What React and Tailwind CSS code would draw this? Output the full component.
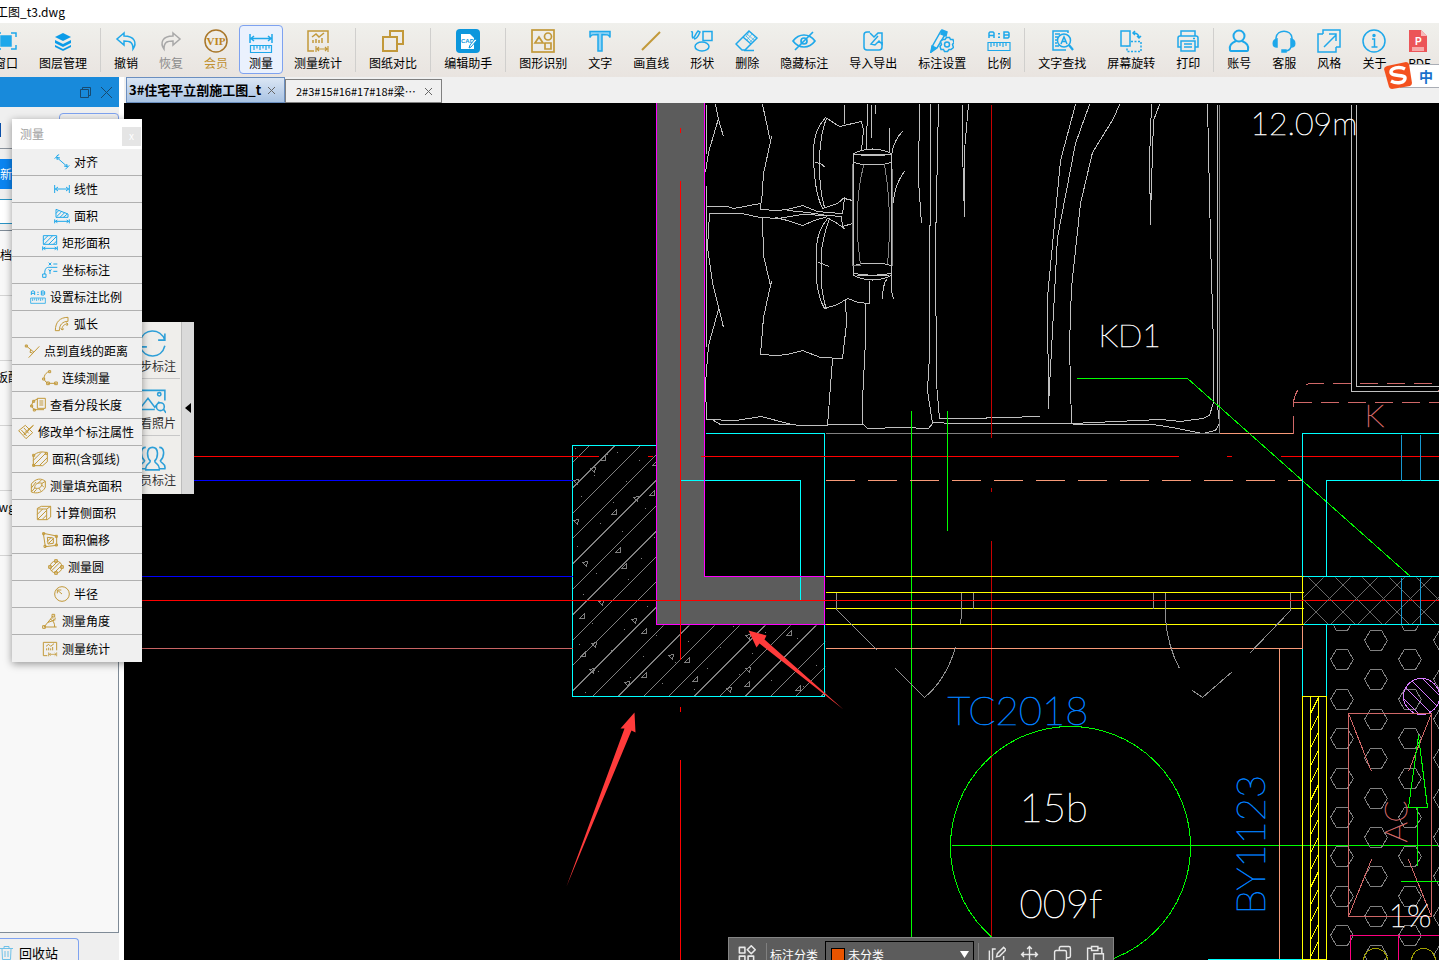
import { useState } from 'react';

const BLUE = '#1fa8ea';
const GOLD = '#c2993a';

const Icon = ({ color = BLUE, size = 24, width = 1.5, children }) => (
    <svg
        width={size}
        height={size}
        viewBox="0 0 24 24"
        fill="none"
        stroke={color}
        strokeWidth={width}
        className="shrink-0"
        aria-hidden="true"
    >
        {children}
    </svg>
);

const RatioIcon = ({ size }) => (
    <Icon size={size}>
        <path d="M2 9V4l1-1h3l1 1v5M2 6.500h5M17 3h4l1 1v4l-1 1h-4zM17 6h5" />
        <path d="M12 4v1.500M12 7.500v1.500" strokeWidth="2" />
        <path d="M1 13.500h22v8H1zM4 14v4M7 14v3M10 14v4M13 14v3M16 14v4M19 14v3" strokeWidth="1.200" />
    </Icon>
);

const StatsIcon = ({ size }) => (
    <Icon size={size} color={GOLD}>
        <path d="M8 22H2V2h20v12M6 8l4-3 3 3 5-4M7 14v-3M10 14V10M13 14v-3M16 14V9" />
        <path d="M10 17v6M22 17v6M11 20h10M13 18l-2 2 2 2M19 18l2 2-2 2" strokeWidth="1.200" />
    </Icon>
);

const toolbarItems = [
    {
        label: '窗口',
        icon: (
            <Icon>
                <rect x="7" y="7" width="10" height="10" fill={BLUE} />
                <path d="M2 8V4h5M17 4h5v4M22 16v4h-5M7 20H2v-4" />
            </Icon>
        ),
    },
    {
        label: '图层管理',
        icon: (
            <Icon color="none">
                <path d="M12 4l8 4-8 4-8-4z" fill="#0b9be8" />
                <path d="M4 11l8 4 8-4v3l-8 4-8-4zM4 16l8 4 8-4v2l-8 4-8-4z" fill="#0b9be8" />
            </Icon>
        ),
        divider: true,
    },
    {
        label: '撤销',
        icon: (
            <Icon>
                <path d="M10 4L3 10l7 6v-4c6 0 9 1 9 8 4-6 2-13-9-13z" />
            </Icon>
        ),
    },
    {
        label: '恢复',
        labelClass: 'text-[#8c8c8c]',
        icon: (
            <Icon color="#a8a8a8">
                <path d="M14 4l7 6-7 6v-4c-6 0-9 1-9 8-4-6-2-13 9-13z" />
            </Icon>
        ),
    },
    {
        label: '会员',
        labelClass: 'text-[#c09030]',
        icon: (
            <Icon color="#a9772a">
                <circle cx="12" cy="12" r="11" />
                <text x="12" y="16" textAnchor="middle" stroke="none" fill="#bd8420" className="font-['Liberation_Serif',serif] text-[11px] font-bold">
                    VIP
                </text>
            </Icon>
        ),
    },
    {
        label: '测量',
        icon: (
            <Icon>
                <path d="M1 5v9M23 5v9M2 9.500h20M5 7L2 9.500 5 12M19 7l3 2.500-3 2.500" />
                <path d="M1.500 16.500h21v7h-21zM5 17v4M8 17v2.500M11 17v4M14 17v2.500M17 17v4M20 17v2.500" strokeWidth="1.200" />
            </Icon>
        ),
    },
    { label: '测量统计', icon: <StatsIcon />, divider: true },
    {
        label: '图纸对比',
        icon: (
            <Icon color={GOLD} width="2">
                <path d="M9 8V2h13v13h-6" />
                <rect x="2" y="8" width="14" height="14" />
            </Icon>
        ),
        divider: true,
    },
    {
        label: '编辑助手',
        icon: (
            <Icon color="none">
                <rect width="24" height="24" rx="4" fill="#0c97dc" />
                <path d="M5 5h9l4 4v11H5z" fill="#fff" />
                <text x="5" y="14" fill="#0c97dc" className="font-['Liberation_Sans',sans-serif] text-[6px] font-bold">
                    CAD
                </text>
                <path d="M21 11l-6 7-2 1 1-3 5-6z" fill="#fff" stroke="#0c97dc" strokeWidth="1" />
            </Icon>
        ),
        divider: true,
    },
    {
        label: '图形识别',
        icon: (
            <Icon color={GOLD} width="1.700">
                <rect x="1" y="1" width="22" height="22" />
                <circle cx="17" cy="7.500" r="3.500" />
                <path d="M8 8l-4 6h8zM14 14h6v6h-6z" />
            </Icon>
        ),
    },
    {
        label: '文字',
        icon: (
            <Icon>
                <path d="M2 2.500h20v6c-1-3-3-3-8-3V22h-4V5.500c-5 0-7 0-8 3z" fill="#8fd3f5" />
            </Icon>
        ),
    },
    {
        label: '画直线',
        icon: (
            <Icon color={GOLD} width="2">
                <path d="M3 21L21 3" />
            </Icon>
        ),
    },
    {
        label: '形状',
        icon: (
            <Icon>
                <path d="M13 2.500h9v9h-9z" />
                <ellipse cx="12" cy="17.500" rx="7" ry="4.500" />
                <path d="M1 3c3-2 0 5 2 6 2 0 2-4 5-7l2 1c-2 5-4 7-6 7" />
            </Icon>
        ),
    },
    {
        label: '删除',
        icon: (
            <Icon>
                <path d="M14 2l8 7L10 21H7l-6-6zM8 8l8 7M9 21.500h10" />
                <path d="M12 5l7 6M14 3L11 8M17 5l-5 6M20 8l-5 5M11 7l6 6" strokeWidth=".6" />
            </Icon>
        ),
    },
    {
        label: '隐藏标注',
        icon: (
            <Icon width="1.700">
                <path d="M1 12c6-8 16-8 22 0-6 8-16 8-22 0zM3 21L21 3" />
                <circle cx="12" cy="12" r="3" />
            </Icon>
        ),
    },
    {
        label: '导入导出',
        icon: (
            <Icon>
                <path d="M9 3H6a3 3 0 0 0-3 3v12a3 3 0 0 0 3 3h12a3 3 0 0 0 3-3v-5" />
                <path d="M9 4l4 4 4-4h4v11l-3-3-4 4-4-1 7-8" />
            </Icon>
        ),
    },
    {
        label: '标注设置',
        icon: (
            <Icon>
                <path d="M11 2l5 2-9 15-6 4 2-7z" />
                <path d="M12 1l5 2-1 4-5-2zM1 23l1-6 4 2z" fill={BLUE} />
                <path d="M13 10.500l2 0 1.500-2h3l1 2h2.500l1 3-1.500 2 1 3-2.500 2h-2l-1.500 2h-3l-1-2h-2.500l-1-3 1.500-2-1-3z" fill="#edebe8" />
                <circle cx="17" cy="15.500" r="2.500" />
            </Icon>
        ),
    },
    { label: '比例', icon: <RatioIcon />, divider: true },
    {
        label: '文字查找',
        icon: (
            <Icon>
                <path d="M18 4V2H3v19h13M5 5h5M5 8h3M5 11h2M5 14h2M5 17h4" />
                <circle cx="14" cy="11.500" r="6.500" />
                <path d="M19 16l4 5" strokeWidth="2.200" />
                <path d="M11 15l3-7 3 7M12 12.500h4" />
            </Icon>
        ),
    },
    {
        label: '屏幕旋转',
        icon: (
            <Icon>
                <rect x="2" y="2" width="9" height="15" />
                <path d="M12 12.500h10v10H8v-5" strokeDasharray="2 1.500" />
                <path d="M14 4c4 0 6 2 6 5M16 2l-2 2 2 2M18 7l2 2 2-2" />
            </Icon>
        ),
    },
    {
        label: '打印',
        icon: (
            <Icon>
                <path d="M5 7V2h14v5M5 18H2V9q0-2 2-2h16q2 0 2 2v9h-3" />
                <path d="M5 12h14v10H5zM8 15h8M8 18h8M17 9.500h2" />
            </Icon>
        ),
        divider: true,
    },
    {
        label: '账号',
        icon: (
            <Icon width="2">
                <circle cx="12" cy="7" r="5.500" />
                <path d="M9 12c-5 2-7 5-6 9 0 1 1 1 2 1h14c1 0 2 0 2-1 1-4-1-7-6-9" />
            </Icon>
        ),
    },
    {
        label: '客服',
        icon: (
            <Icon>
                <path d="M4 12V9c1-9 15-9 16 0v3M19 18c-1 3-3 4-6 4" />
                <path d="M5 10v8c-5 0-5-7 0-8zM19 10v8c5 0 5-7 0-8zM10 21h4v2h-4z" fill={BLUE} />
            </Icon>
        ),
    },
    {
        label: '风格',
        icon: (
            <Icon>
                <path d="M6 5V1h17v17h-4M6 5H1v18h18v-5M7 18L19 6M12 5h7v7" />
            </Icon>
        ),
    },
    {
        label: '关于',
        icon: (
            <Icon>
                <circle cx="12" cy="12" r="11" />
                <path d="M10 10h2.500v8M9.500 18h6" />
                <circle cx="12" cy="6.500" r="1" fill={BLUE} />
            </Icon>
        ),
    },
    {
        label: 'PDF',
        icon: (
            <Icon color="none">
                <path d="M2 1h12l6 6v16H2z" fill="#ec5558" />
                <path d="M14 1v6h6z" fill="#f7b9b9" />
                <path d="M5 18h12v4H5z" fill="#f7a9a9" />
                <text x="8" y="16" fill="#fff" className="font-['Liberation_Sans',sans-serif] text-[10px] font-bold">
                    P
                </text>
            </Icon>
        ),
    },
];

const measureItems = [
    { label: '对齐', icon: <path d="M4 3l3-2M1 7l6-6M17 23l6-6M4 5l16 14M4 5l5 1M4 5l1 4M20 19l-5-1M20 19l-1-4" /> },
    { label: '线性', icon: <path d="M1 6v12M23 6v12M2 12h20M6 9l-4 3 4 3M18 9l4 3-4 3" /> },
    { label: '面积', icon: <path d="M3 14V2l18 7v5zM4 13l7-7M9 14l7-7M14 14l6-5M3 8l4-4M1 17v6M23 17v6M2 20h20M5 18l-3 2 3 2M19 18l3 2-3 2" /> },
    { label: '矩形面积', icon: <path d="M2 1h20v13H2zM2 8l7-7M3 14L16 1M10 14L22 2M17 14l5-5M1 17v6M23 17v6M2 20h20M5 18l-3 2 3 2M19 18l3 2-3 2" /> },
    { label: '坐标标注', icon: <path d="M1 18h5v5H1zM4 18c0-7 2-10 6-10h13M10 1l4 4M14 1l-4 4M10 11l2 3 2-3M12 14v4M17 3h6M17 14h6" /> },
    { label: '设置标注比例', ratio: true },
    { label: '弧长', gold: true, icon: <path d="M2 22C2 9 9 2 21 2v6C13 8 8 13 8 22zM12 21c0-6 3-9 9-9M10 18l2 3 3-2M18 10l3 2-2 3" /> },
    { label: '点到直线的距离', gold: true, icon: <path d="M7 22L23 5M3 4l12 10M10 10l-1 4 4 1M2 3h3v3H2z" /> },
    { label: '连续测量', gold: true, icon: <path d="M11 2C3 5 1 13 6 18l3 2h13M10 1h3v3h-3zM1 12h3v3H1zM7 18h4v4H7zM19 18h4v4h-4z" /> },
    { label: '查看分段长度', gold: true, icon: <path d="M11 2h12v15H11zM14 6h6M14 9h6M14 12h6M11 3L5 6l-3 7 4 6h15M4 5h3v3H4zM1 12h3v3H1zM5 18h3v3H5z" /> },
    { label: '修改单个标注属性', gold: true, icon: <path d="M1 10l10-8 11 11-10 9zM5 9l8 9M9 6l7 8M23 2L11 15l-2 1 1-3z" /> },
    { label: '面积(含弧线)', gold: true, icon: <path d="M2 22V7c6-6 14-7 21-4v13l-7 6zM2 14L14 2M3 21L21 3M11 22l12-12M1 5h3v3H1zM1 20h3v3H1zM20 2h3v3h-3z" /> },
    { label: '测量填充面积', gold: true, icon: <path d="M2 21V9c7-9 15-9 21-4v9c-4 8-13 10-21 7zM7 15c0-6 5-9 11-7 0 6-5 9-11 7zM2 15l7-9M6 21l4-4M16 19l-3-4M21 14l-4-4M12 8l5-5M3 20l4-5M18 8l5-3" /> },
    { label: '计算侧面积', gold: true, icon: <path d="M2 5l6-3h14v16l-5 4H2zM2 6h14v16M16 6l6-4M2 14l8-8M3 21L16 8M10 21l6-6" /> },
    { label: '面积偏移', gold: true, icon: <path d="M2 2l20 4v14L5 22zM8 8l9 1v8l-8 1zM8 14l6-6M10 17l7-7M1 1h3v3H1zM20 5h3v3h-3zM3 20h3v3H3zM20 18h3v3h-3z" /> },
    { label: '测量圆', gold: true, icon: <path d="M12 3a9 9 0 1 0 0 18 9 9 0 0 0 0-18zM4 14L14 4M5 18L18 5M9 21L21 9M10 1h4v4h-4zM10 19h4v4h-4zM1 10h4v4H1zM19 10h4v4h-4z" /> },
    { label: '半径', gold: true, icon: <path d="M12 1a11 11 0 1 0 0 22 11 11 0 0 0 0-22zM12 12L6 7M5 11V6h6" /> },
    { label: '测量角度', gold: true, icon: <path d="M22 21H3L17 4M12 9c5 2 7 6 7 12M9 14l9-3M15 2h4v4h-4zM1 19h4v4H1zM16 8l3 3 1-4" /> },
    { label: '测量统计', stats: true },
];

const sideItems = [
    { label: '同步标注', icon: <path d="M1 10C4-2 19-2 23 9M23 14C20 26 5 26 1 15M23 3v6h-6M1 21v-6h6" /> },
    { label: '查看照片', icon: <path d="M14 20H1V3h22v9M1 19l7-9 6 8 4-5M22 20l2 3M18 5a1 1 0 1 0 0 3 1 1 0 0 0 0-3M19 14a3.500 3.500 0 1 0 0 7 3.500 3.500 0 0 0 0-7" /> },
    { label: '人员标注', icon: <path d="M6 22H1c-1-5 3-4 4-7C1 11 1 3 6 3M18 22h5c1-5-3-4-4-7 4-4 4-12-1-12M12 3c-6 0-5 9-2 12 0 3-5 2-4 8h12c1-6-4-5-4-8 3-3 4-12-2-12z" /> },
];

const furniture = [
    // bed outline and sheet folds
    'M706 104V153M715 104L718 119L723 136M718 118L708 152L705 172M706 185V346',
    'M706 206H727L733 208L760 203V209L777 210L787 209L802 205L817 211L827 212L842 213L844 198L852 200',
    'M787 210L807 212L827 215L841 216L842 226L852 223',
    'M709 213H741L760 217L778 218L802 214L827 215M775 217L787 220L802 225L814 220L827 216',
    'M709 213L707 247L712 282L723 327M718 309L708 345L705 383L706 419L735 420L761 416L787 423L798 425H827M713 420L720 424H790M827 424H862',
    'M762 104L770 141L763 173L761 203M770 141L771 136',
    'M762 217L763 255L770 285L763 317L760 354L777 355L787 354L802 350L820 357L842 358L846 323L845 300M770 285L771 281M832 359L827 425',
    // pillows
    'M825 117Q813 130 813 150Q813 190 822 208L837 203L845 196M826 118Q819 135 819 165Q819 190 824 207M815 162L820 163L825 167',
    'M825 117L839 126L861 121L863 130L861 150M844 104V123M867 104L866 149M871 104V137M875 104V113',
    'M827 218Q816 232 816 248V280Q818 298 824 308L837 304L847 298L858 302L869 303V280M829 218Q821 240 821 255V285Q823 300 826 309M827 218L834 221L845 229M818 262L829 266',
    'M865 303V340L862 400V423L867 428L903 427L928 428L932 423L927 390L929 355L930 104',
    'M938 104L935 247L936 383L939 418H968L1040 416M932 422L955 423H1071',
    // lamp
    'M853 153Q872 144 891 153V275Q872 284 853 275ZM853 154H891M860 155H884M853 162L862 164H882L891 162M853 265L862 263H882L891 265M853 273L872 275L891 273M856 275H888',
    'M889 127V152M902 131Q893 140 891 155M904 171Q893 185 892 210V250M891 265V290L893 299M886 279Q882 285 882 298',
    'M919 104L918 180L921 223M962 104V150L964 216M968 104L964 150V216',
    // curtains
    'M1075 104L1060 160L1047 297L1048 409M1048 405L1057 237L1075 143L1089 104',
    'M1119 104L1113 118L1092 152L1080 203L1071 287L1069 345L1071 423',
    'M1151 104L1149 160L1150 225M1159 104L1153 120L1150 216',
    'M1207 104L1210 240L1213 345V402L1209 415L1202 418L1180 421L1160 419L1072 423',
    'M1217 104V405L1219 423L1215 430L1202 433L1172 427L1152 424H1072',
    'M1351 104V391H3000M1356 104V386H3000',
];

const hatchTriangles = [
    [602, 458], [592, 469], [654, 463], [575, 481], [651, 493], [635, 498], [613, 512], [575, 521], [617, 550],
    [584, 563], [623, 566], [600, 602], [581, 616], [633, 620], [643, 631], [593, 644], [582, 654], [670, 656],
    [686, 660], [591, 670], [643, 675], [626, 683], [694, 679], [747, 669], [746, 684], [728, 689], [797, 688],
    [747, 636], [788, 633],
];

const steps = (count, start, step) => Array.from({ length: count }, (_, i) => start + i * step);

const Drawing = () => (
    <svg className="block h-full w-full" role="img" aria-label="住宅平立剖施工图">
        <defs>
            <clipPath id="wall">
                <path d="M572 445H656V625H825V696H572Z" />
            </clipPath>
            <clipPath id="band">
                <path d="M1303 577H3000V624H1303Z" />
            </clipPath>
            <clipPath id="honeycomb">
                <path d="M1328 625H3000V2000H1328Z" />
            </clipPath>
            <clipPath id="pipe">
                <circle cx="1421" cy="696" r="18" />
            </clipPath>
        </defs>
        <g transform="translate(-123.500 -102.500)" fill="none" shapeRendering="crispEdges">
            <path d={furniture.join('')} stroke="#c0c0c0" />
            <path
                d="M863 165Q852 210 860 264M884 164Q892 210 887 264M852 163V265H860M892 168V265M1219 104V433M825 433H1219"
                stroke="#808080"
            />

            {/* concrete hatch */}
            <g clipPath="url(#wall)" stroke="#808080">
                {steps(20, 1034, 25.4).map((sum) => (
                    <path key={sum} d={`M572 ${sum - 572}L${sum - 445} 445`} />
                ))}
                {hatchTriangles.map(([x, y], i) => (
                    <path key={i} d={i % 2 ? `M${x - 2} ${y - 1}l5-1l-1 5z` : `M${x - 2} ${y + 2}h5v-5z`} />
                ))}
                {steps(90, 0, 1).map((i) => (
                    <path key={i} d={`M${574 + ((i * 47) % 250)} ${448 + ((i * 83) % 246)}h1`} />
                ))}
            </g>

            {/* shear wall */}
            <path d="M656 102H704V576H824V624H656Z" fill="#5c5c5c" />
            <path d="M656 445H572V696H824V624M705 433H824V576M680 480H800V600" stroke="#00ffff" />
            <path d="M656 102V624M704 102V576M656 624H825M704 576H824M824 576V624" stroke="#ff00ff" />

            {/* axes */}
            <path d="M124 480H572M124 576H572" stroke="#0000ff" />
            <path d="M124 648H572" stroke="#c86464" />
            <path
                d="M124 456H598M647 456H652M700 456H1178M1226 456H1231M1280 456H3000M680 127V132M680 180V659M680 706V711M680 759V2000"
                stroke="#ff0000"
            />
            <path d="M991 104V437M991 487V491M991 540V2000" stroke="#c80000" />
            <path d="M911 410V2000M947 410V530M951 845H3000M1076 378H1187L1410 576" stroke="#00ff00" />

            {/* windows */}
            <path d="M825 480H1302" stroke="#f79a78" strokeDasharray="29 13" />
            <path d="M825 648H1302V625M1279 648V2000M1219 433H1293" stroke="#f79a78" />
            <path d="M825 576H1303M825 592H1303M825 608H1303M825 624H1303M1302 576V624" stroke="#ffff00" />
            <path
                d="M836 592V609L877 650M895 668L924 697Q945 680 955 647M961 592V613L960 624M973 592V608M1153 592V608M1165 592V618Q1167 645 1179 668M1290 592V610L1249 653M1232 671L1202 697L1192 690"
                stroke="#909090"
            />
            <path d="M124 600H3000" stroke="#ff0000" />
            <path
                d="M3000 433H1302V576M3000 480H1326V576M1303 576H3000M1303 624H3000M1302 648V696M1326 624V696M1207 959H1303"
                stroke="#00ffff"
            />
            <g clipPath="url(#band)" stroke="#686868">
                {steps(12, 1280, 27).map((x) => (
                    <path key={x} d={`M${x} 576l48 48M${x + 17} 576l-48 48`} />
                ))}
            </g>
            <path d="M1401 434V480M1420 434V480M1401 577V623M1420 577V623" stroke="#1898d0" />
            <path d="M1302 696H1326V959H1302ZM1310 696V959M1318 696V959" stroke="#ffff00" />
            {steps(15, 713, 17.4).map((y) => (
                <path key={y} d={`M1310 ${y}L1318 ${y - 16}`} stroke="#ffff00" />
            ))}

            {/* honeycomb paving */}
            <g clipPath="url(#honeycomb)" stroke="#808080">
                {steps(6, 0, 1).map((col) =>
                    steps(10, 0, 1).map((row) => {
                        const x = Math.round(1330 + col * 34.2);
                        const y = Math.round((col % 2 ? 640 : 620) + row * 39.4);
                        return <path key={`${col}-${row}`} d={`M${x} ${y}l6-10h11l6 10l-6 10h-11z`} />;
                    })
                )}
            </g>
            <circle cx="1421" cy="696" r="18" stroke="#d77bff" />
            <g clipPath="url(#pipe)" stroke="#d77bff">
                {steps(5, 1368, 13).map((x) => (
                    <path key={x} d={`M${x} 676l40 40`} />
                ))}
            </g>
            <path
                d="M1348 713H1431V916H1348ZM1348 713L1371 771M1431 713L1408 771M1348 916L1371 859M1431 916L1408 859"
                stroke="#d06868"
            />
            <path d="M1293 433V402Q1295 385 1310 383H1430Q1440 386 1442 402M1293 402H1442" stroke="#d06868" strokeDasharray="18 9" />
            <path d="M1418 735L1408 807H1427ZM1417 807V865M1400 881H3000" stroke="#00ff00" />
            <path d="M1350 960V935H3000M1398 935V960" stroke="#ff0080" />
            <path d="M1363 960a12 12 0 0 1 24 0M1411 960a12 12 0 0 1 24 0" stroke="#a0a000" />
            <circle cx="1070" cy="846" r="120" stroke="#00ff00" />

            {/* labels */}
            <g className="font-[Lato,'Liberation_Sans',sans-serif] font-thin" strokeWidth=".6" shapeRendering="auto">
                <g fill="#ffffff" stroke="#ffffff">
                    <text x="1250" y="134" className="text-[32px]">12.09m</text>
                    <text x="1098" y="346" className="text-[32px]">KD1</text>
                    <text x="1388" y="926" className="text-[32px]">1%</text>
                    <text x="1019" y="821" className="text-[40px]">15b</text>
                    <text x="1019" y="917" className="text-[40px]">009f</text>
                </g>
                <g fill="#0080ff" stroke="#0080ff" className="text-[40px]">
                    <text x="947" y="724">TC2018</text>
                    <text transform="translate(1264 914) rotate(-90)">BY1123</text>
                </g>
                <g fill="#d06868" stroke="#d06868" className="text-[32px]">
                    <text x="1364" y="426">K</text>
                    <text transform="translate(1406 842) rotate(-90)">AC</text>
                </g>
            </g>

            <g fill="#ff3b3b" shapeRendering="auto">
                <path d="M748 630L766 635L764 639L843 709L759 643L756 647Z" />
                <path d="M634 712L635 732L631 730L566 886L624 728L620 728Z" />
            </g>
        </g>
    </svg>
);

const Toolbar = () => {
    const [active, setActive] = useState('测量');

    return (
        <nav className="flex h-[54px] shrink-0 items-start gap-px overflow-hidden bg-linear-to-b from-[#f0f0ec] to-[#e9e4e0] pt-0.5">
            <div className="-ml-[17px]" />
            {toolbarItems.map((item) => (
                <div key={item.label} className="flex shrink-0 items-center gap-[3px]">
                    <button
                        onClick={() => setActive(item.label)}
                        className={`flex h-[49px] flex-col items-center gap-0.5 rounded border px-[9px] pt-[3px] ${
                            active === item.label ? 'border-[#7ea2f0] bg-[#eaf1fd]' : 'border-transparent'
                        }`}
                    >
                        {item.icon}
                        <span className={`text-xs leading-4 whitespace-nowrap ${item.labelClass || ''}`}>{item.label}</span>
                    </button>
                    {item.divider && <div className="mr-0.5 h-11 w-px bg-[#d0cfcd]" />}
                </div>
            ))}
        </nav>
    );
};

const files = [
    { name: '存档', indent: '-ml-3' },
    { name: '' },
    { name: '板配', indent: '-ml-1' },
    { name: '' },
    { name: '.dwg', indent: '-ml-3' },
];

const Sidebar = () => (
    <aside className="flex w-[119px] shrink-0 flex-col overflow-hidden bg-[#efefef]">
        <div className="flex h-[30px] shrink-0 items-center justify-end gap-2 bg-[#188adb] pr-1.5">
            <button aria-label="还原">
                <svg width="13" height="13" viewBox="0 0 13 13" fill="none" stroke="#174a70">
                    <path d="M1.500 3.500h8v8h-8zM3.500 3.500v-2h8v8h-2" />
                </svg>
            </button>
            <button aria-label="关闭面板">
                <svg width="13" height="13" viewBox="0 0 13 13" stroke="#174a70">
                    <path d="M1 1l11 11M12 1L1 12" />
                </svg>
            </button>
        </div>
        <div className="mt-1.5 flex h-9 justify-between border-b border-[#8a929c]">
            <div className="mt-2.5 h-3.5 w-px bg-[#0b4fa8]" />
            <button aria-label="文件" className="h-8 w-[60px] rounded border border-[#7ea2f0]" />
        </div>
        <button className="mt-2.5 h-[30px] shrink-0 bg-[#0a84f0] text-left text-xs text-white">新建</button>
        <input aria-label="搜索" className="mt-2.5 h-[25px] shrink-0 border-y border-[#2a93c4] bg-white text-xs" />
        <ul className="mt-1.5 flex-1 border-t border-r border-b border-[#7f8b97] bg-[#f8f8f8] text-xs whitespace-nowrap">
            {files.map((file, i) => (
                <li key={i} className="h-[65px] border-b border-[#d4d4d4] pt-2 first:pt-4">
                    <span className={file.indent}>{file.name}</span>
                </li>
            ))}
        </ul>
        <button className="mt-[5px] flex h-[22px] w-[79px] shrink-0 items-center gap-1.5 rounded-tr border-t border-r border-[#7ea2f0] pt-1.5 text-[13px]">
            <svg width="13" height="14" viewBox="0 0 13 14" fill="none" stroke="#6fc0e8">
                <path d="M0 2.500h13M4 2V.5h5V2M2 3l.5 10.500h8L11 3M5 5v6M8 5v6" />
            </svg>
            回收站
        </button>
    </aside>
);

const SidePanel = () => (
    <div className="absolute top-[322px] left-[124px] flex h-[172px] w-[70px] bg-[#efeeeb]">
        <div className="flex flex-1 flex-col">
            {sideItems.map((item) => (
                <button key={item.label} className="flex h-[57px] w-14 flex-col items-center justify-between border-b border-[#c8c8c8] pt-2 pb-1 last:border-transparent">
                    <Icon size={27} color="#2d9fd8" width="1.400">
                        {item.icon}
                    </Icon>
                    <span className="text-xs leading-4 whitespace-nowrap text-[#333]">{item.label}</span>
                </button>
            ))}
        </div>
        <button aria-label="收起" className="flex w-[13px] shrink-0 items-center justify-center border-l border-[#bdbdbd] bg-[#dadada]">
            <svg width="6" height="10" viewBox="0 0 6 10">
                <path d="M6 0v10L0 5z" />
            </svg>
        </button>
    </div>
);

const MeasureMenu = () => (
    <div className="absolute top-[119px] left-3 w-[130px] bg-[#f0f0f0] shadow-[0_2px_8px_rgba(0,0,0,0.4)]">
        <div className="flex h-[30px] items-center justify-between bg-white pl-2 text-xs text-[#a0a0a0]">
            测量
            <button aria-label="关闭" className="mt-1 mr-px flex size-[19px] items-center justify-center bg-[#e5e5e5] text-[10px] text-white">
                x
            </button>
        </div>
        <ul>
            {measureItems.map((item) => (
                <li key={item.label} className="h-[27px] border-b border-[#b0b0b0] last:border-b-0">
                    <button className="flex h-full w-full items-center justify-center gap-1 pr-0.5 text-xs whitespace-nowrap">
                        {item.ratio && <RatioIcon size={16} />}
                        {item.stats && <StatsIcon size={16} />}
                        {item.icon && (
                            <Icon size={16} color={item.gold ? GOLD : BLUE}>
                                {item.icon}
                            </Icon>
                        )}
                        {item.label}
                    </button>
                </li>
            ))}
        </ul>
    </div>
);

const bottomIcons = [
    { label: '编辑', path: 'M11 5H7v16h14v-7M3 7v16h4M12 15l1-4 8-8 3 3-8 8z' },
    { label: '移动', path: 'M12 2v20M2 12h20M9 5l3-3 3 3M9 19l3 3 3-3M5 9l-3 3 3 3M19 9l3 3-3 3' },
    { label: '复制', path: 'M8 7V4q0-2 2-2h10q2 0 2 2v10q0 2-2 2h-3M2 9q0-2 2-2h11q2 0 2 2v13H2z' },
    { label: '粘贴', path: 'M9 22H2V4h5M15 4h5v6M7 2h8v5H7zM10 11h12v11H10z' },
];

const BottomBar = () => (
    <div className="absolute -bottom-3 left-[728px] flex h-[35px] items-center border border-[#858585] bg-[#5c5c5c] px-2 text-xs text-white">
        <button aria-label="分类">
            <Icon size={19} color="#e8e8e8" width="2">
                <path d="M3 3h7v7H3zM18 1l5 5-5 5-5-5zM3 14h7v7H3zM14 14h7v7h-7z" strokeLinejoin="round" />
            </Icon>
        </button>
        <div className="mr-[3px] ml-2.5 h-6 w-px bg-[#808080]" />
        <label htmlFor="category">标注分类</label>
        <div className="ml-[7px] flex h-[27px] w-[149px] items-center gap-0.5 border border-black pr-1 pl-[5px]">
            <span className="size-3.5 border border-black bg-[#e85400]" />
            <select id="category" className="min-w-0 flex-1 appearance-none bg-transparent pl-px text-xs outline-none">
                <option>未分类</option>
            </select>
            <svg width="9" height="7" viewBox="0 0 9 7" fill="#fff" aria-hidden="true">
                <path d="M0 0h9L4.500 7z" />
            </svg>
        </div>
        <div className="mr-2 ml-1 h-6 w-px bg-[#808080]" />
        <div className="flex gap-3.5">
            {bottomIcons.map((item) => (
                <button key={item.label} aria-label={item.label}>
                    <Icon size={19} color="#e8e8e8" width="1.800">
                        <path d={item.path} />
                    </Icon>
                </button>
            ))}
        </div>
    </div>
);

const ImeBadge = () => (
    <div className="absolute top-[61px] right-0 flex items-center">
        <svg width="28" height="29" viewBox="0 0 28 29" className="z-10 -mr-3">
            <path d="M3 5L22 1q2 0 3 2l3 19q0 2-2 3L8 28q-2 0-3-2L0 8q0-2 3-3z" fill="#f4511e" />
            <path d="M21 8c-6-3-14-1-14 3 0 5 14 2 14 6 0 5-8 6-14 3" fill="none" stroke="#fff" strokeWidth="3.500" />
        </svg>
        <div className="flex h-6 w-[39px] items-center justify-end border-y border-[#a9adb5] bg-white pr-1.5 text-sm font-bold text-[#1a70cc]">
            中
        </div>
    </div>
);

const App = () => (
    <div className="relative flex h-screen flex-col overflow-hidden bg-[#f0f0f0] font-['Noto_Sans_CJK_SC',sans-serif] text-black">
        <header className="h-[23px] shrink-0 overflow-hidden bg-white text-xs leading-[23px]">
            <h1 className="-ml-1">工图_t3.dwg</h1>
        </header>
        <Toolbar />
        <div className="flex min-h-0 flex-1">
            <Sidebar />
            <main className="flex min-w-0 flex-1 flex-col border-l-[5px] border-white">
                <div className="flex h-[26px] shrink-0 items-end bg-[#f0f0f0] pl-0.5">
                    <div className="flex h-[26px] w-[159px] items-center justify-between border border-[#6b8fc0] bg-linear-to-b from-[#dbe6f4] to-[#a9c3e3] pr-2 pl-0.5 text-[13px] font-bold whitespace-nowrap">
                        3#住宅平立剖施工图_t
                        <button aria-label="关闭标签">
                            <svg width="9" height="9" viewBox="0 0 9 9" stroke="#666">
                                <path d="M1 1l7 7M8 1L1 8" />
                            </svg>
                        </button>
                    </div>
                    <div className="flex h-6 w-[157px] items-center justify-between border border-[#808080] pr-2 pl-2.5 text-[11px] whitespace-nowrap">
                        2#3#15#16#17#18#梁⋯
                        <button aria-label="关闭标签">
                            <svg width="9" height="9" viewBox="0 0 9 9" stroke="#666">
                                <path d="M1 1l7 7M8 1L1 8" />
                            </svg>
                        </button>
                    </div>
                </div>
                <div className="min-h-0 flex-1 overflow-hidden bg-black">
                    <Drawing />
                </div>
            </main>
        </div>
        <SidePanel />
        <MeasureMenu />
        <BottomBar />
        <ImeBadge />
    </div>
);

export default App;
